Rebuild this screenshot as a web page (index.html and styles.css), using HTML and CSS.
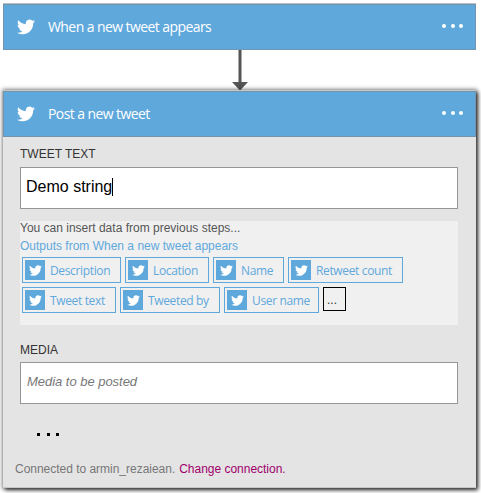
FILE: index.html
```html
<!DOCTYPE html>
<html lang="en">
<head>
<meta charset="utf-8">
<title>Post a new tweet</title>
<link rel="stylesheet" href="styles.css">
</head>
<body>
<svg class="defs" width="0" height="0"><symbol id="bird" viewBox="0 2.2 24 19.6"><path fill="currentColor" d="M23.95 4.57a10 10 0 0 1-2.82.77 4.96 4.96 0 0 0 2.16-2.72c-.95.55-2 .95-3.13 1.18a4.92 4.92 0 0 0-8.38 4.48C7.69 8.09 4.07 6.13 1.64 3.16a4.82 4.82 0 0 0-.67 2.48c0 1.71.87 3.21 2.19 4.1a4.9 4.9 0 0 1-2.23-.62v.06a4.92 4.92 0 0 0 3.95 4.83 5 5 0 0 1-2.21.08 4.94 4.94 0 0 0 4.6 3.42A9.87 9.87 0 0 1 0 19.54a13.99 13.99 0 0 0 7.56 2.21c9.05 0 14-7.5 14-13.98 0-.21 0-.42-.02-.63a9.94 9.94 0 0 0 2.41-2.57z"/></symbol></svg>
<main class="flow">
  <section class="trigger">
    <header class="bar"><svg class="logo"><use href="#bird"/></svg><span class="title">When a new tweet appears</span><span class="menu"><i></i><i></i><i></i></span></header>
  </section>
  <svg class="arrow" width="18" height="41" viewBox="0 0 18 41"><path fill="#555" d="M7.500 0h3v32H17L9 40.500 1 32h6.500z"/></svg>
  <section class="card">
    <header class="bar"><svg class="logo"><use href="#bird"/></svg><span class="title">Post a new tweet</span><span class="menu"><i></i><i></i><i></i></span></header>
    <div class="body">
      <div class="label tweet-label">TWEET TEXT</div>
      <div class="field"><span class="value">Demo string</span><span class="caret"></span></div>
      <div class="panel">
        <div class="hint">You can insert data from previous steps...</div>
        <div class="source">Outputs from When a new tweet appears</div>
        <div class="chips">
          <div class="row">
            <span class="chip description"><b><svg><use href="#bird"/></svg></b><span>Description</span></span>
            <span class="chip location"><b><svg><use href="#bird"/></svg></b><span>Location</span></span>
            <span class="chip name"><b><svg><use href="#bird"/></svg></b><span>Name</span></span>
            <span class="chip retweets"><b><svg><use href="#bird"/></svg></b><span>Retweet count</span></span>
          </div>
          <div class="row">
            <span class="chip text"><b><svg><use href="#bird"/></svg></b><span>Tweet text</span></span>
            <span class="chip author"><b><svg><use href="#bird"/></svg></b><span>Tweeted by</span></span>
            <span class="chip user"><b><svg><use href="#bird"/></svg></b><span>User name</span></span>
            <span class="more">...</span>
          </div>
        </div>
      </div>
      <div class="label media-label">MEDIA</div>
      <div class="field"><span class="placeholder">Media to be posted</span></div>
      <div class="dots"><i></i><i></i><i></i></div>
      <div class="footer"><span class="account">Connected to armin_rezaiean.</span><span class="change">Change connection.</span></div>
    </div>
  </section>
</main>
</body>
</html>
```
FILE: styles.css
```css
* { box-sizing: border-box; }
html { height: 100%; background: #fff; }
body { margin: 0; min-height: 493px; background: #fff; font-family: "Liberation Sans", sans-serif; font-size: 12px; overflow: hidden; white-space: nowrap; }
.defs { display: block; }
.flow { display: flex; flex-direction: column; width: 473px; padding-top: 3px; margin-left: 3px; }
.trigger { border-top: 1px solid #b8c0c6; }
.bar { display: flex; align-items: center; height: 46px; padding: 0 12px 0 13px; background: #5fa8dc; border: 1px solid #7195b1; color: #fff; }
.logo { width: 18px; height: 16px; margin-top: -1px; }
.title { margin-left: 13px; font-family: "Open Sans", sans-serif; font-size: 14px; line-height: 20px; letter-spacing: -.58px; }
.menu { display: flex; gap: 4.500px; margin-left: auto; margin-top: -2px; }
.menu i { width: 4px; height: 4px; border-radius: 50%; background: #fff; }
.arrow { display: block; align-self: center; height: 41px; margin-bottom: -1px; }
.card { height: 398px; background: #e4e4e4; border: solid #c4c8c6; border-width: 1px 0; box-shadow: 2px 2px 4px rgba(0,0,0,.75), 0 0 4px 1px rgba(0,0,0,.4); }
.body { padding: 0 18px 0 17px; }
.label { color: #333; line-height: 14px; }
.tweet-label { padding-top: 10px; height: 30px; }
.field { display: flex; align-items: center; height: 42px; padding: 0 5px; background: #fff; border: 1px solid #969696; }
.value { color: #000; font-size: 16px; line-height: 20px; margin-top: -3px; }
.caret { width: 1px; height: 18px; background: #000; margin-top: -2px; }
.placeholder { color: #777; font-size: 13px; font-style: italic; letter-spacing: -.03px; margin-top: -3px; margin-left: 1px; }
.panel { height: 104px; margin-top: 12px; background: #f0f0f0; }
.hint { height: 16px; line-height: 14px; color: #555; }
.source { height: 20px; line-height: 18px; color: #5fa8dc; }
.chips { display: flex; flex-direction: column; gap: 4px; padding-left: 2px; }
.row { display: flex; gap: 4px; }
.chip { display: flex; align-items: center; height: 26px; padding-left: 2px; border: 1px solid #5fa8dc; color: #5fa8dc; font-family: "Open Sans", sans-serif; font-size: 12px; letter-spacing: -.35px; }
.chip b { display: flex; align-items: center; justify-content: center; width: 20px; height: 20px; background: #5fa8dc; color: #fff; }
.chip svg { width: 13px; height: 11px; }
.chip > span { margin-left: 5px; margin-top: 1px; line-height: 18px; }
.description { width: 99px; }
.location { width: 84px; }
.name { width: 71px; }
.retweets { width: 115px; }
.text { width: 94px; }
.author { width: 100px; }
.user { width: 95px; }
.more { width: 23px; height: 24px; padding-left: 3px; border: 1px solid #000; color: #333; line-height: 25px; }
.media-label { height: 37px; padding-top: 18px; }
.dots { display: flex; gap: 6.500px; margin: 29px 0 0 17px; }
.dots i { width: 3px; height: 3px; background: #000; }
.footer { display: flex; gap: 4px; margin: 25px 0 0 -5px; line-height: 16px; }
.account { color: #777; letter-spacing: -.02px; }
.change { color: #a0006b; letter-spacing: -.02px; }
```
